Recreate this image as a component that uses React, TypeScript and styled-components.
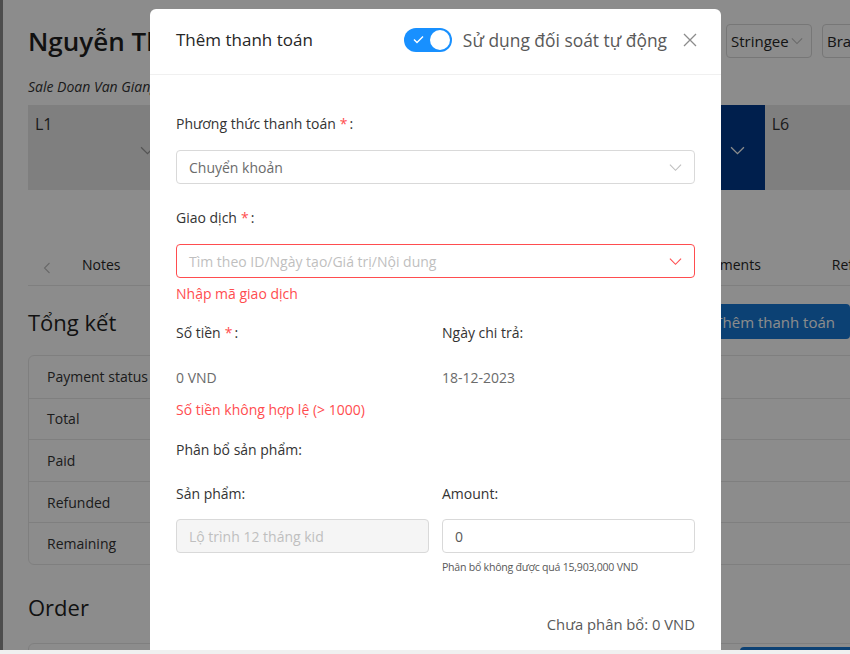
import React from "react";
import styled, { createGlobalStyle } from "styled-components";

const GlobalStyle = createGlobalStyle`
  html, body {
    margin: 0;
    padding: 0;
  }
  body {
    font-family: "Open Sans", "Noto Sans", sans-serif;
    color: rgba(0, 0, 0, 0.85);
    background: #fff;
  }
  * {
    box-sizing: border-box;
  }
`;

const Screen = styled.div`
  width: 850px;
  height: 654px;
  display: flex;
  flex-direction: column;
  overflow: hidden;
`;

const Viewport = styled.div`
  position: relative;
  flex: 1;
  display: flex;
  align-items: flex-start;
  overflow: hidden;
  background: #fff;
`;

const ScrollStrip = styled.div`
  height: 4px;
  background: #f0f0f0;
  flex-shrink: 0;
`;

const SideEdge = styled.div`
  width: 3px;
  height: 100%;
  flex-shrink: 0;
  background: #8c8c8c;
`;

const Main = styled.div`
  width: 884px;
  flex-shrink: 0;
  margin-left: 25px;
  display: flex;
  flex-direction: column;
  & > * {
    flex-shrink: 0;
  }
`;

const Header = styled.div`
  display: flex;
  align-items: center;
  justify-content: space-between;
  margin-top: 24px;
  height: 34px;
`;

const Name = styled.h1`
  margin: 0;
  font-size: 26px;
  font-weight: 600;
  color: #1f1f1f;
  white-space: nowrap;
`;

const HeaderActions = styled.div`
  display: flex;
  gap: 10px;
`;

const OutlineButton = styled.div<{ $w: number }>`
  height: 34px;
  padding: 0 6px 0 4px;
  border: 1px solid #d9d9d9;
  border-radius: 4px;
  display: flex;
  align-items: center;
  gap: 2px;
  font-size: 15px;
  color: #262626;
  white-space: nowrap;
  width: ${({ $w }) => $w}px;
`;

const SaleLine = styled.div`
  margin-top: 19px;
  font-size: 14px;
  font-style: italic;
  color: #333;
`;

const LevelBar = styled.div`
  display: flex;
  height: 85px;
  margin-top: 9px;
`;

const Level = styled.div<{ $active?: boolean }>`
  flex: 1;
  display: flex;
  flex-direction: column;
  padding: 8px 20px 0 7px;
  background: ${({ $active }) => ($active ? "#003a8c" : "#e8e8e8")};
  color: ${({ $active }) => ($active ? "#fff" : "#333")};
  font-size: 16px;
`;

const LevelChevron = styled.div`
  display: flex;
  justify-content: flex-end;
  margin-top: 8px;
`;

const Tabs = styled.div`
  display: flex;
  align-items: center;
  margin-top: 51px;
  height: 45px;
  border-bottom: 1px solid #e8e8e8;
  font-size: 14px;
  padding-top: 2px;
  & > * {
    flex-shrink: 0;
  }
`;

const TabArrow = styled.div`
  width: 54px;
  display: flex;
  padding: 8px 0 0 15px;
`;

const Tab = styled.div`
  margin-right: 71px;
  white-space: nowrap;
  color: #262626;
`;

const SectionHead = styled.div<{ $mt?: number }>`
  display: flex;
  align-items: center;
  justify-content: space-between;
  height: 35px;
  margin-top: ${({ $mt }) => $mt ?? 18}px;
`;

const SectionTitle = styled.h2`
  margin: 0;
  font-size: 22px;
  font-weight: 500;
  color: #1f1f1f;
`;

const PrimaryButton = styled.div<{ $mr?: number }>`
  height: 35px;
  padding: 0 15px;
  margin-right: ${({ $mr }) => $mr ?? 62}px;
  border-radius: 4px;
  background: #1677d4;
  color: #fff;
  font-size: 15px;
  display: flex;
  align-items: center;
  white-space: nowrap;
`;

const Table = styled.div`
  margin-top: 16px;
  border: 1px solid #e8e8e8;
  border-radius: 6px;
`;

const TableRow = styled.div`
  height: 41.6px;
  display: flex;
  align-items: center;
  padding-left: 18px;
  font-size: 14px;
  color: #333;
  & + & {
    border-top: 1px solid #e8e8e8;
  }
`;

const OrderBox = styled.div`
  margin-top: 18px;
  height: 46px;
  padding-top: 3px;
  border: 1px solid #e8e8e8;
  border-radius: 6px;
  display: flex;
  justify-content: flex-end;
`;

const Mask = styled.div`
  position: absolute;
  inset: 0;
  background: rgba(0, 0, 0, 0.45);
`;

const Modal = styled.div`
  position: absolute;
  top: 9px;
  left: 150px;
  width: 571px;
  height: 700px;
  background: #fff;
  border-radius: 6px;
  display: flex;
  flex-direction: column;
`;

const ModalHeader = styled.div`
  height: 66px;
  padding: 0 24px 4px 26px;
  border-bottom: 1px solid #f0f0f0;
  display: flex;
  align-items: center;
`;

const ModalTitle = styled.div`
  flex: 1;
  font-size: 17px;
  font-weight: 500;
  color: #262626;
`;

const Switch = styled.div`
  width: 48px;
  height: 24px;
  border-radius: 12px;
  background: #1890ff;
  display: flex;
  align-items: center;
  justify-content: space-between;
  padding: 0 2px 0 9px;
`;

const Knob = styled.div`
  width: 20px;
  height: 20px;
  border-radius: 50%;
  background: #fff;
`;

const SwitchLabel = styled.div`
  margin: 0 16px 0 11px;
  font-size: 17.4px;
  color: #595959;
`;

const ModalBody = styled.div`
  padding: 38px 26px 0;
  display: flex;
  flex-direction: column;
`;

const Label = styled.div<{ $mb?: number; $mt?: number }>`
  font-size: 14px;
  line-height: 22px;
  color: #333;
  margin-top: ${({ $mt }) => $mt ?? 0}px;
  margin-bottom: ${({ $mb }) => $mb ?? 0}px;
`;

const Star = styled.span`
  color: #ff4d4f;
  margin: 0 2px 0 4px;
`;

const SelectBox = styled.div<{ $error?: boolean; $disabled?: boolean }>`
  height: 34px;
  border: 1px solid ${({ $error }) => ($error ? "#ff4d4f" : "#d9d9d9")};
  border-radius: 4px;
  background: ${({ $disabled }) => ($disabled ? "#f5f5f5" : "#fff")};
  padding: 0 12px 0 12px;
  display: flex;
  align-items: center;
  justify-content: space-between;
  font-size: 14px;
`;

const Value = styled.span<{ $tone?: "muted" | "placeholder" | "normal" }>`
  color: ${({ $tone }) =>
    $tone === "placeholder" ? "#bfbfbf" : $tone === "muted" ? "#6b6b6b" : "#595959"};
`;

const ErrorText = styled.div<{ $mt?: number }>`
  font-size: 14px;
  line-height: 22px;
  color: #ff4d4f;
  margin-top: ${({ $mt }) => $mt ?? 0}px;
`;

const TwoCols = styled.div<{ $mt?: number }>`
  display: grid;
  grid-template-columns: 1fr 1fr;
  column-gap: 13px;
  margin-top: ${({ $mt }) => $mt ?? 0}px;
`;

const Col = styled.div`
  display: flex;
  flex-direction: column;
`;

const PlainValue = styled.div`
  margin-top: 23px;
  font-size: 14px;
  line-height: 22px;
  color: #6b6b6b;
`;

const Helper = styled.div`
  margin-top: 6px;
  font-size: 10.6px;
  line-height: 16px;
  letter-spacing: -0.25px;
  color: #595959;
`;

const Remaining = styled.div`
  margin-top: 38px;
  text-align: right;
  font-size: 14.8px;
  line-height: 22px;
  color: #595959;
`;

const Chevron = ({ color = "#bfbfbf", size = 13 }: { color?: string; size?: number }) => (
  <svg width={size} height={size} viewBox="0 0 14 14" fill="none">
    <polyline points="1,4 7,10 13,4" stroke={color} strokeWidth="1.2" />
  </svg>
);

const LeftChevron = () => (
  <svg width="8" height="12" viewBox="0 0 8 12" fill="none">
    <polyline points="6.5,1 1.5,6 6.5,11" stroke="#bfbfbf" strokeWidth="1.1" />
  </svg>
);

const CloseIcon = () => (
  <svg width="14" height="14" viewBox="0 0 14 14" fill="none">
    <path d="M1 1 L13 13 M13 1 L1 13" stroke="#8c8c8c" strokeWidth="1.3" />
  </svg>
);

const Check = () => (
  <svg width="11" height="9" viewBox="0 0 11 9" fill="none">
    <polyline points="1,4.5 4,7.5 10,1.5" stroke="#fff" strokeWidth="1.4" />
  </svg>
);

const levels = ["L1", "L2", "L3", "L4", "L5", "L6"];
const summaryRows = ["Payment status", "Total", "Paid", "Refunded", "Remaining"];
const tabs = [
  "Notes",
  "Lịch sử cuộc gọi điện",
  "Đơn hàng",
  "Thanh toán",
  "Attachments",
  "Refunds",
];

export default function App() {
  return (
    <>
      <GlobalStyle />
      <Screen>
        <Viewport>
          <SideEdge />
          <Main>
            <Header>
              <Name>Nguyễn Thị Thu Hà</Name>
              <HeaderActions>
                <OutlineButton $w={86}>
                  Stringee
                  <Chevron size={12} />
                </OutlineButton>
                <OutlineButton $w={90}>
                  Branch
                  <Chevron size={12} />
                </OutlineButton>
              </HeaderActions>
            </Header>
            <SaleLine>Sale Doan Van Giang</SaleLine>
            <LevelBar>
              {levels.map((l, i) => (
                <Level key={l} $active={i === 4}>
                  {l}
                  {i < 5 && (
                    <LevelChevron>
                      <Chevron color={i === 4 ? "#fff" : "#9a9a9a"} size={15} />
                    </LevelChevron>
                  )}
                </Level>
              ))}
            </LevelBar>
            <Tabs>
              <TabArrow>
                <LeftChevron />
              </TabArrow>
              {tabs.map((t) => (
                <Tab key={t}>{t}</Tab>
              ))}
            </Tabs>
            <SectionHead>
              <SectionTitle>Tổng kết</SectionTitle>
              <PrimaryButton>Thêm thanh toán</PrimaryButton>
            </SectionHead>
            <Table>
              {summaryRows.map((r) => (
                <TableRow key={r}>{r}</TableRow>
              ))}
            </Table>
            <SectionHead $mt={25}>
              <SectionTitle>Order</SectionTitle>
            </SectionHead>
            <OrderBox>
              <PrimaryButton $mr={14}>Tạo đơn hàng mới</PrimaryButton>
            </OrderBox>
          </Main>
          <Mask />
          <Modal>
            <ModalHeader>
              <ModalTitle>Thêm thanh toán</ModalTitle>
              <Switch>
                <Check />
                <Knob />
              </Switch>
              <SwitchLabel>Sử dụng đối soát tự động</SwitchLabel>
              <CloseIcon />
            </ModalHeader>
            <ModalBody>
              <Label $mb={15}>
                Phương thức thanh toán<Star>*</Star>:
              </Label>
              <SelectBox>
                <Value $tone="muted">Chuyển khoản</Value>
                <Chevron />
              </SelectBox>
              <Label $mt={23} $mb={15}>
                Giao dịch<Star>*</Star>:
              </Label>
              <SelectBox $error>
                <Value $tone="placeholder">Tìm theo ID/Ngày tạo/Giá trị/Nội dung</Value>
                <Chevron color="#ff4d4f" />
              </SelectBox>
              <ErrorText $mt={5}>Nhập mã giao dịch</ErrorText>
              <TwoCols $mt={17}>
                <Col>
                  <Label>
                    Số tiền<Star>*</Star>:
                  </Label>
                  <PlainValue>0 VND</PlainValue>
                </Col>
                <Col>
                  <Label>Ngày chi trả:</Label>
                  <PlainValue>18-12-2023</PlainValue>
                </Col>
              </TwoCols>
              <ErrorText $mt={10}>Số tiền không hợp lệ (&gt; 1000)</ErrorText>
              <Label $mt={18}>Phân bổ sản phẩm:</Label>
              <TwoCols $mt={22}>
                <Col>
                  <Label $mb={14}>Sản phẩm:</Label>
                  <SelectBox $disabled>
                    <Value $tone="placeholder">Lộ trình 12 tháng kid</Value>
                  </SelectBox>
                </Col>
                <Col>
                  <Label $mb={14}>Amount:</Label>
                  <SelectBox>
                    <Value>0</Value>
                  </SelectBox>
                  <Helper>Phân bổ không được quá 15,903,000 VND</Helper>
                </Col>
              </TwoCols>
              <Remaining>Chưa phân bổ: 0 VND</Remaining>
            </ModalBody>
          </Modal>
        </Viewport>
        <ScrollStrip />
      </Screen>
    </>
  );
}
